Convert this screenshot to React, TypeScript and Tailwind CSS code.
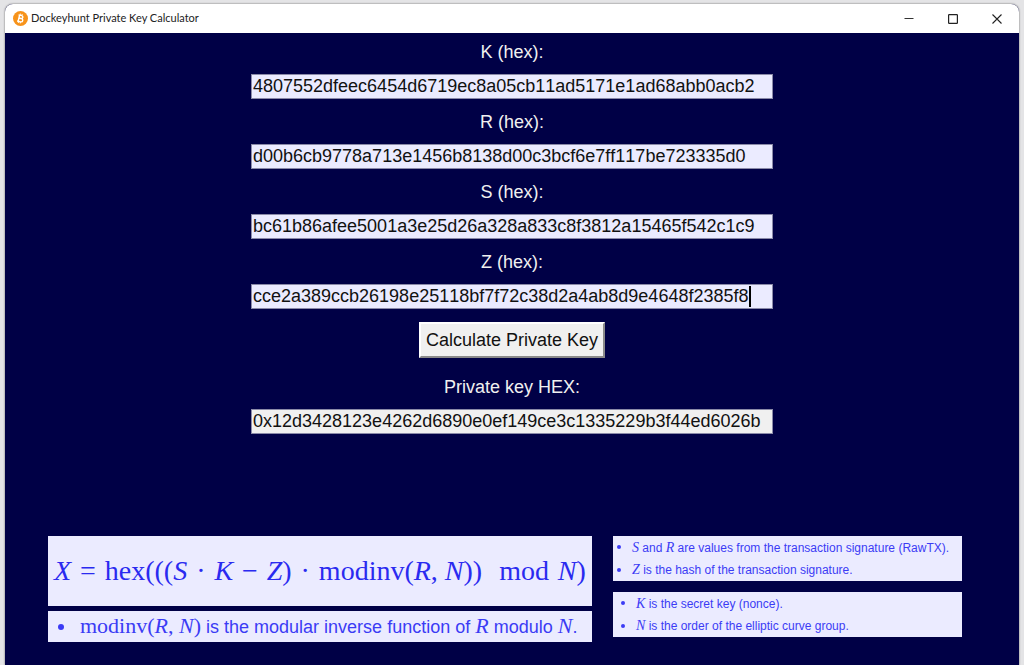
import type { ReactNode } from 'react';

const fields = [
  { id: 'k', label: 'K (hex):', value: '4807552dfeec6454d6719ec8a05cb11ad5171e1ad68abb0acb2', caret: false },
  { id: 'r', label: 'R (hex):', value: 'd00b6cb9778a713e1456b8138d00c3bcf6e7ff117be723335d0', caret: false },
  { id: 's', label: 'S (hex):', value: 'bc61b86afee5001a3e25d26a328a833c8f3812a15465f542c1c9', caret: false },
  { id: 'z', label: 'Z (hex):', value: 'cce2a389ccb26198e25118bf7f72c38d2a4ab8d9e4648f2385f8', caret: true },
];

function Var({ children }: { children: ReactNode }) {
  return <i className="font-['Liberation_Serif',serif] italic">{children}</i>;
}

function TitleBar() {
  return (
    <header className="flex h-[29px] items-center bg-white pl-2">
      <svg viewBox="0 0 30 30" className="mr-[3px] size-[15px]" aria-hidden="true">
        <circle cx="15" cy="15" r="15" fill="#f7931a" />
        <g transform="rotate(13 15 15)" fill="none" stroke="#fff" strokeWidth="2.8">
          <path d="M9.5 8.8H16a3 3 0 0 1 0 6h-4.3H17a3.3 3.3 0 0 1 0 6.6H9.5M11.7 8.8v12.6" />
          <path d="M12.6 5.5v3.3M16.4 5.5v3.3M12.6 21.4v3.3M16.4 21.4v3.3" strokeWidth="2" />
        </g>
      </svg>
      <h1 className="grow font-['Lato',sans-serif] text-[11px] text-[#222]">
        Dockeyhunt Private Key Calculator
      </h1>
      <div className="flex h-full">
        <button type="button" aria-label="Minimize" className="flex w-11 items-center justify-center">
          <svg viewBox="0 0 10 10" className="size-[10px]" stroke="#333" fill="none">
            <path d="M0.5 4.5h9" />
          </svg>
        </button>
        <button type="button" aria-label="Maximize" className="flex w-11 items-center justify-center">
          <svg viewBox="0 0 10 10" className="size-[10px]" stroke="#222" strokeWidth="1.2" fill="none">
            <rect x="0.6" y="0.6" width="8.8" height="8.8" rx="0.6" />
          </svg>
        </button>
        <button type="button" aria-label="Close" className="flex w-11 items-center justify-center">
          <svg viewBox="0 0 10 10" className="size-[10px]" stroke="#222" strokeWidth="1.1" fill="none">
            <path d="M0.5 0.5l9 9M9.5 0.5l-9 9" />
          </svg>
        </button>
      </div>
    </header>
  );
}

function Note({ children }: { children: ReactNode }) {
  return (
    <li className="flex items-center whitespace-nowrap">
      <span className="mr-[11px] size-1 shrink-0 rounded-full bg-[#3b3bf5]" />
      <span>{children}</span>
    </li>
  );
}

export default function App() {
  return (
    <div className="flex min-h-screen flex-col bg-[#e4e4e6] pt-1 pr-[5px] pl-[5px] font-['Liberation_Sans',sans-serif]">
      <div className="flex grow flex-col overflow-hidden rounded-t-lg bg-[#000046] shadow-[0_0_2px_#555]">
        <TitleBar />
        <main className="flex grow flex-col">
          <form className="mx-auto flex w-[522px] max-w-full flex-col items-center pt-2 text-lg leading-[22px] text-[#f0f0f0]">
            {fields.map((f) => (
              <div key={f.id} className="mb-3 flex w-full flex-col items-center">
                <label htmlFor={f.id} className="mb-[11px]">{f.label}</label>
                <div className="relative w-full">
                  <input
                    id={f.id}
                    type="text"
                    defaultValue={f.value}
                    className="block h-[25px] w-full border border-[#8a8aa8] bg-[#ebebff] px-px text-[#111] outline-none [font-kerning:none]"
                  />
                  {f.caret && <span className="absolute top-[2px] right-[22px] h-[21px] w-[2px] bg-black" />}
                </div>
              </div>
            ))}
            <button
              type="button"
              className="mt-px mb-[18px] h-9 border-2 border-t-white border-r-[#8a8a8a] border-b-[#8a8a8a] border-l-white bg-[#f0f0f0] px-[5px] text-[#111]"
            >
              Calculate Private Key
            </button>
            <label htmlFor="out" className="mb-[11px]">Private key HEX:</label>
            <input
              id="out"
              type="text"
              readOnly
              defaultValue="0x12d3428123e4262d6890e0ef149ce3c1335229b3f44ed6026b"
              className="block h-[25px] w-full border border-[#8a8aa8] bg-[#f0f0f0] px-px text-[#111] outline-none [font-kerning:none]"
            />
          </form>

          <div className="mt-auto grid grid-cols-[544fr_349fr] gap-x-[21px] pt-6 pr-[57px] pb-[23px] pl-[43px] text-[#3b3bf5]">
            <div className="flex flex-col gap-[5px]">
              <div className="flex h-[70px] items-center justify-between bg-[#ebebff] px-[6px] font-['Liberation_Serif',serif] text-[28px] whitespace-nowrap text-[#2a2af0]">
                <Var>X</Var>
                <span>=</span>
                <span>hex(((<Var>S</Var></span>
                <span>·</span>
                <Var>K</Var>
                <span>−</span>
                <span><Var>Z</Var>)</span>
                <span>·</span>
                <span>modinv(<Var>R</Var>, <Var>N</Var>))</span>
                <span className="pl-2">mod</span>
                <span><Var>N</Var>)</span>
              </div>
              <div className="flex h-[31px] items-center bg-[#ebebff] pr-3 pl-[10px] text-lg whitespace-nowrap">
                <span className="mr-4 size-[6px] shrink-0 rounded-full bg-[#3b3bf5]" />
                <p>
                  <span className="font-['Liberation_Serif',serif] text-[22px]">
                    modinv(<Var>R</Var>, <Var>N</Var>)
                  </span>{' '}
                  is the modular inverse function of <span className="text-[22px]"><Var>R</Var></span> modulo{' '}
                  <span className="text-[22px]"><Var>N</Var></span>.
                </p>
              </div>
            </div>
            <div className="flex flex-col gap-[11px] text-xs">
              <ul className="flex h-[45px] flex-col justify-around bg-[#ebebff] px-1">
                <Note><span className="text-sm"><Var>S</Var></span> and <span className="text-sm"><Var>R</Var></span> are values from the transaction signature (RawTX).</Note>
                <Note><span className="text-sm"><Var>Z</Var></span> is the hash of the transaction signature.</Note>
              </ul>
              <ul className="flex h-[45px] flex-col justify-around bg-[#ebebff] px-2">
                <Note><span className="text-sm"><Var>K</Var></span> is the secret key (nonce).</Note>
                <Note><span className="text-sm"><Var>N</Var></span> is the order of the elliptic curve group.</Note>
              </ul>
            </div>
          </div>
        </main>
      </div>
    </div>
  );
}
